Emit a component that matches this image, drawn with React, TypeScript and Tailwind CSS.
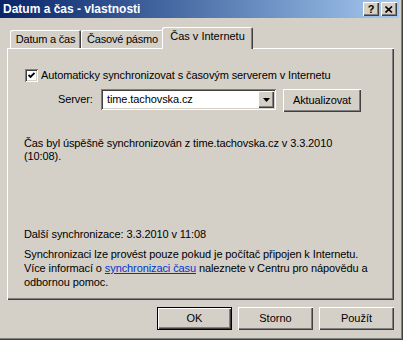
import React from "react";

const raised =
  "bg-[#d4d0c8] shadow-[inset_1px_1px_#ffffff,inset_-1px_-1px_#404040,inset_-2px_-2px_#808080]";
const sunken =
  "bg-white shadow-[inset_1px_1px_#808080,inset_-1px_-1px_#ffffff,inset_2px_2px_#404040,inset_-2px_-2px_#d4d0c8]";

function Tab({ label, width }: { label: string; width: string }) {
  return (
    <div
      className={`${width} h-[18px] rounded-t-[2px] pt-[3px] flex justify-center whitespace-nowrap tracking-[-0.2px] bg-[#d4d0c8] shadow-[inset_1px_1px_#ffffff,inset_-1px_0_#404040,inset_-2px_0_#808080]`}
    >
      {label}
    </div>
  );
}

function Button({ label, isDefault }: { label: string; isDefault?: boolean }) {
  if (isDefault) {
    return (
      <div className="w-[75px] h-[23px] border border-black">
        <div className={`${raised} w-full h-full flex items-center justify-center`}>
          {label}
        </div>
      </div>
    );
  }
  return (
    <div className={`${raised} w-[75px] h-[23px] flex items-center justify-center`}>
      {label}
    </div>
  );
}

export default function App() {
  return (
    <div className="w-[403px] h-[340px] overflow-hidden bg-[#d4d0c8] pr-[4px] text-[11px] leading-[13px] text-black font-['Liberation_Sans',Arial,sans-serif] shadow-[inset_-1px_-1px_#404040,inset_-2px_-2px_#808080]">
      {/* title bar */}
      <div className="h-[18px] flex items-center justify-between pl-[3px] pr-[2px] bg-gradient-to-r from-[#0a246a] to-[#a6caf0]">
        <span className="text-white font-bold text-[12px]">Datum a čas - vlastnosti</span>
        <div className="flex gap-[2px]">
          <div className={`${raised} w-[16px] h-[14px] flex items-center justify-center font-bold text-[11px] leading-none`}>
            ?
          </div>
          <div className={`${raised} w-[16px] h-[14px] flex items-center justify-center`}>
            <svg width="8" height="7" viewBox="0 0 8 7">
              <path d="M0.5 0.5 L7 6.5 M7 0.5 L0.5 6.5" stroke="black" strokeWidth="1.6" />
            </svg>
          </div>
        </div>
      </div>

      {/* tabs */}
      <div className="mt-[9px] pl-[10px] flex items-end relative z-10">
        <Tab label="Datum a čas" width="w-[71px]" />
        <Tab label="Časové pásmo" width="w-[83px]" />
        <div className="w-[91px] h-[22px] -ml-[2px] -mb-[1px] rounded-t-[2px] pt-[3px] flex justify-center whitespace-nowrap bg-[#d4d0c8] shadow-[inset_1px_1px_#ffffff,inset_-1px_0_#404040,inset_-2px_0_#808080]">
          Čas v Internetu
        </div>
      </div>

      {/* tab page */}
      <div className="ml-[7px] w-[387px] h-[252px] pt-[21px] tracking-[-0.1px] shadow-[inset_1px_1px_#ffffff,inset_-1px_-1px_#404040,inset_-2px_-2px_#808080]">
        <div className="flex items-center pl-[18px]">
          <div className={`${sunken} w-[13px] h-[13px] flex items-center justify-center`}>
            <svg width="7" height="7" viewBox="0 0 7 7">
              <path d="M0.5 3 L2.5 5 L6.5 1" stroke="black" strokeWidth="1.8" fill="none" />
            </svg>
          </div>
          <span className="ml-[3px] whitespace-nowrap">
            Automaticky synchronizovat s časovým serverem v Internetu
          </span>
        </div>

        <div className="flex items-start mt-[7px] pl-[51px]">
          <div className="w-[43px] h-[21px] flex items-center">Server:</div>
          <div className={`${sunken} w-[175px] h-[21px] flex items-center justify-between pl-[6px] pr-[2px]`}>
            <span>time.tachovska.cz</span>
            <div className={`${raised} w-[16px] h-[17px] flex items-center justify-center`}>
              <svg width="7" height="4" viewBox="0 0 7 4">
                <path d="M0 0 H7 L3.5 4 Z" fill="black" />
              </svg>
            </div>
          </div>
          <div className={`${raised} ml-[7px] w-[78px] h-[23px] flex items-center justify-center`}>
            Aktualizovat
          </div>
        </div>

        <div className="mt-[25px] pl-[17px] whitespace-nowrap">
          Čas byl úspěšně synchronizován z time.tachovska.cz v 3.3.2010
          <br />
          (10:08).
        </div>

        <div className="mt-[65px] pl-[17px] whitespace-nowrap">
          Další synchronizace: 3.3.2010 v 11:08
        </div>

        <div className="mt-[6px] pl-[17px] whitespace-nowrap leading-[14px]">
          Synchronizaci lze provést pouze pokud je počítač připojen k Internetu.
          <br />
          Více informací o{" "}
          <span className="text-[#0033cc] underline">synchronizaci času</span> naleznete v
          Centru pro nápovědu a
          <br />
          odbornou pomoc.
        </div>
      </div>

      {/* buttons */}
      <div className="mt-[7px] flex justify-end gap-[6px] pr-[5px]">
        <Button label="OK" isDefault />
        <Button label="Storno" />
        <Button label="Použít" />
      </div>
    </div>
  );
}
